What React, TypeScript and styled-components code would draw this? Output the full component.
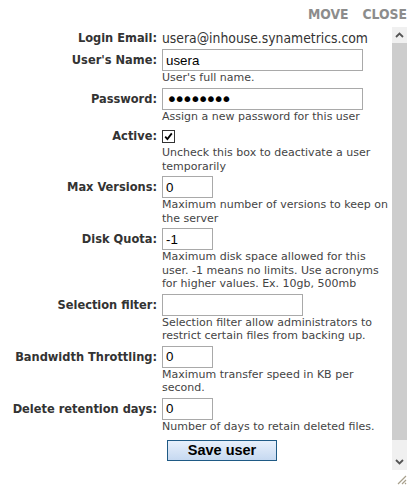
import React from 'react';
import styled, { createGlobalStyle } from 'styled-components';

const GlobalStyle = createGlobalStyle`
  body {
    margin: 0;
    background: #fff;
  }
`;

const Dialog = styled.div`
  width: 407px;
`;

const TitleBar = styled.div`
  height: 27px;
  display: flex;
  justify-content: flex-end;
  align-items: center;
  gap: 14px;
`;

const TitleLink = styled.span`
  font: bold 13.8px 'DejaVu Sans Condensed', 'DejaVu Sans', sans-serif;
  color: #8c8c8c;
  cursor: pointer;
`;

const Panel = styled.div`
  display: flex;
  height: 458px;
`;

const Content = styled.div`
  flex: 1;
  min-width: 0;
  overflow: hidden;
`;

// drawn scrollbar, the page is photographed without native ones
const ScrollBar = styled.div`
  width: 15px;
  display: flex;
  flex-direction: column;
`;

const ScrollButton = styled.div<{ $h: number }>`
  height: ${(p) => p.$h}px;
  display: flex;
  align-items: center;
  justify-content: center;
  background: #f0f0f0;
`;

const Track = styled.div`
  flex: 1;
  background: #f0f0f0;
`;

const Thumb = styled.div`
  height: 397px;
  background: #cdcdcd;
`;

const Corner = styled.div`
  height: 15px;
  display: flex;
  align-items: flex-end;
  justify-content: flex-end;
  background: #fff;
`;

const Form = styled.div`
  display: grid;
  grid-template-columns: 157px 1fr;
  column-gap: 5px;
  row-gap: 3px;
  align-items: start;
  padding: 3px 0 40px 0;
`;

const Label = styled.div<{ $h: number }>`
  text-align: right;
  white-space: nowrap;
  font: bold 12.7px 'DejaVu Sans Condensed', 'DejaVu Sans', sans-serif;
  line-height: ${(p) => p.$h}px;
  color: #333;
`;

const Field = styled.div`
  display: flex;
  flex-direction: column;
  align-items: flex-start;
  min-width: 0;
`;

const Value = styled.div`
  font: 13.8px 'DejaVu Sans Condensed', 'DejaVu Sans', sans-serif;
  line-height: 16px;
  color: #333;
  white-space: nowrap;
`;

const TextInput = styled.input<{ $w: number }>`
  box-sizing: border-box;
  width: ${(p) => p.$w}px;
  height: 22px;
  margin: 0;
  padding: 1px 3px;
  border: 1px solid #a9a9a9;
  font: 13.33px 'Liberation Sans', Arial, sans-serif;
  color: #000;
  background: #fff;
  outline: none;

  &[type='password'] {
    font: 20px 'DejaVu Sans', sans-serif;
    letter-spacing: -4px;
    padding: 0 3px;
    line-height: 18px;
  }
`;

const Help = styled.div`
  font: 11px 'DejaVu Sans', Verdana, sans-serif;
  line-height: 13.5px;
  color: #444;
  max-width: 228px;
`;

const CheckRow = styled.div`
  height: 20px;
  padding-top: 4px;
  box-sizing: border-box;
`;

const CheckBox = styled.span`
  display: flex;
  align-items: center;
  justify-content: center;
  box-sizing: border-box;
  width: 13px;
  height: 13px;
  border: 1px solid #333;
  background: #fff;
`;

const ButtonRow = styled.div`
  grid-column: 2;
  padding: 4px 0 0 5px;
`;

const SaveButton = styled.button`
  box-sizing: border-box;
  width: 110px;
  height: 21px;
  padding: 0;
  border: 1px solid #1f5a85;
  background: linear-gradient(#e8f0fb, #c6d9f1);
  font: bold 14.5px 'Liberation Sans', Arial, sans-serif;
  color: #000;
  line-height: 19px;
  cursor: pointer;
`;

type FieldDef = { label: string; value: string; width: number; help: string; password?: boolean };

const fields: FieldDef[] = [
  { label: "User's Name:", value: 'usera', width: 201, help: "User's full name." },
  { label: 'Password:', value: '12345678', width: 201, help: 'Assign a new password for this user', password: true },
];

const moreFields: FieldDef[] = [
  { label: 'Max Versions:', value: '0', width: 51, help: 'Maximum number of versions to keep on the server' },
  {
    label: 'Disk Quota:',
    value: '-1',
    width: 51,
    help: 'Maximum disk space allowed for this user. -1 means no limits. Use acronyms for higher values. Ex. 10gb, 500mb',
  },
  {
    label: 'Selection filter:',
    value: '',
    width: 141,
    help: 'Selection filter allow administrators to restrict certain files from backing up.',
  },
  { label: 'Bandwidth Throttling:', value: '0', width: 51, help: 'Maximum transfer speed in KB per second.' },
  { label: 'Delete retention days:', value: '0', width: 51, help: 'Number of days to retain deleted files.' },
];

const InputRow: React.FC<{ f: FieldDef }> = ({ f }) => (
  <>
    <Label $h={22}>{f.label}</Label>
    <Field>
      <TextInput $w={f.width} type={f.password ? 'password' : 'text'} defaultValue={f.value} />
      <Help>{f.help}</Help>
    </Field>
  </>
);

const Chevron: React.FC<{ up?: boolean }> = ({ up }) => (
  <svg width="9" height="6" viewBox="0 0 9 6">
    <path
      d={up ? 'M1 5 L4.5 1.5 L8 5' : 'M1 1 L4.5 4.5 L8 1'}
      fill="none"
      stroke="#555"
      strokeWidth="1.8"
    />
  </svg>
);

export default function App() {
  return (
    <Dialog>
      <GlobalStyle />
      <TitleBar>
        <TitleLink>MOVE</TitleLink>
        <TitleLink>CLOSE</TitleLink>
      </TitleBar>
      <Panel>
        <Content>
          <Form>
            <Label $h={16}>Login Email:</Label>
            <Field>
              <Value>usera@inhouse.synametrics.com</Value>
            </Field>
            {fields.map((f) => (
              <InputRow key={f.label} f={f} />
            ))}
            <Label $h={20}>Active:</Label>
            <Field>
              <CheckRow>
                <CheckBox>
                  <svg width="9" height="9" viewBox="0 0 9 9">
                    <path d="M1.2 4.6 L3.4 7 L7.8 1.4" fill="none" stroke="#000" strokeWidth="1.8" />
                  </svg>
                </CheckBox>
              </CheckRow>
              <Help>Uncheck this box to deactivate a user temporarily</Help>
            </Field>
            {moreFields.map((f) => (
              <InputRow key={f.label} f={f} />
            ))}
            <ButtonRow>
              <SaveButton>Save user</SaveButton>
            </ButtonRow>
          </Form>
        </Content>
        <ScrollBar>
          <ScrollButton $h={16}>
            <Chevron up />
          </ScrollButton>
          <Track>
            <Thumb />
          </Track>
          <ScrollButton $h={17}>
            <Chevron />
          </ScrollButton>
          <Corner>
            <svg width="12" height="12" viewBox="0 0 12 12">
              <path d="M11 3 L3 11 M11 7 L7 11 M11 10 L10 11" stroke="#a8a08c" strokeWidth="1.2" />
            </svg>
          </Corner>
        </ScrollBar>
      </Panel>
    </Dialog>
  );
}
